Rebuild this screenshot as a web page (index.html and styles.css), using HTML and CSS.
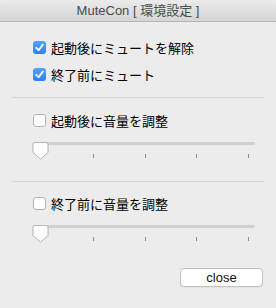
FILE: index.html
```html
<!DOCTYPE html>
<html lang="ja">
<head>
  <meta charset="UTF-8" />
  <title>MuteCon [ 環境設定 ]</title>
  <link rel="stylesheet" href="styles.css">
</head>
<body>
  <div class="window">
    <div class="titlebar">MuteCon [ 環境設定 ]</div>

    <div class="content">
      <!-- ミュート -->
      <div class="section first">
        <label class="row">
          <span class="box checked">
            <svg width="13" height="13" viewBox="0 0 13 13"><path d="M3.2 6.8 L5.6 9.2 L9.9 3.6" fill="none" stroke="#fff" stroke-width="1.8" stroke-linecap="round" stroke-linejoin="round"/></svg>
          </span>
          起動後にミュートを解除
        </label>
        <label class="row">
          <span class="box checked">
            <svg width="13" height="13" viewBox="0 0 13 13"><path d="M3.2 6.8 L5.6 9.2 L9.9 3.6" fill="none" stroke="#fff" stroke-width="1.8" stroke-linecap="round" stroke-linejoin="round"/></svg>
          </span>
          終了前にミュート
        </label>
      </div>

      <div class="separator"></div>

      <!-- 起動後 -->
      <div class="section">
        <label class="row">
          <span class="box"></span>
          起動後に音量を調整
        </label>
        <div class="slider">
          <div class="track"></div>
          <svg class="thumb" width="17" height="18" viewBox="0 0 17 18"><path d="M3 0.5 H14 Q16 0.5 16 2.5 V10.5 L8.5 17 L1 10.5 V2.5 Q1 0.5 3 0.5 Z" fill="#fdfdfd" stroke="#b9b9b9" stroke-width="1"/></svg>
          <div class="ticks"><span></span><span></span><span></span><span></span><span></span></div>
        </div>
      </div>

      <div class="separator second"></div>

      <!-- 終了前 -->
      <div class="section">
        <label class="row">
          <span class="box"></span>
          終了前に音量を調整
        </label>
        <div class="slider">
          <div class="track"></div>
          <svg class="thumb" width="17" height="18" viewBox="0 0 17 18"><path d="M3 0.5 H14 Q16 0.5 16 2.5 V10.5 L8.5 17 L1 10.5 V2.5 Q1 0.5 3 0.5 Z" fill="#fdfdfd" stroke="#b9b9b9" stroke-width="1"/></svg>
          <div class="ticks"><span></span><span></span><span></span><span></span><span></span></div>
        </div>
      </div>

      <div class="buttons">
        <button class="btn">close</button>
      </div>
    </div>
  </div>
</body>
</html>
```

FILE: styles.css
```css
* {
  margin: 0;
  padding: 0;
  box-sizing: border-box;
}

body {
  background-color: #ececec;
  font-family: "Liberation Sans", "Noto Sans CJK JP", sans-serif;
  font-size: 13px;
  color: #000;
}

.window {
  width: 276px;
  height: 308px;
  background: #ececec;
  border-radius: 5px 5px 0 0;
  overflow: hidden;
}

.titlebar {
  height: 22px;
  line-height: 21px;
  text-align: center;
  color: #4a4a4a;
  background: linear-gradient(#ebebeb, #d5d5d5);
  border-bottom: 1px solid #b4b4b4;
}

.content {
  padding: 0 12px;
}

.section.first {
  padding-top: 12px;
}

.row {
  display: flex;
  align-items: center;
  height: 27px;
  padding-left: 21px;
  gap: 5px;
}

.box {
  width: 13px;
  height: 13px;
  border-radius: 3px;
  background: #fff;
  border: 1px solid #b3b3b3;
  flex-shrink: 0;
}

.box.checked {
  border: none;
  background: linear-gradient(#55a3fb, #2e7ff5);
}

.box svg {
  display: block;
}

.separator {
  height: 1px;
  background: #d5d5d5;
  margin: 9px 0 9px;
}

.separator.second {
  margin: 17px 0 8px;
}

.slider {
  position: relative;
  width: 223px;
  height: 22px;
  margin: 8px 0 0 21px;
}

.track {
  height: 3px;
  margin: 5px 1px 0 4px;
  background: #d0d0d0;
  border-radius: 2px;
}

.thumb {
  position: absolute;
  left: -1px;
  top: 0;
  filter: drop-shadow(0 0.5px 0.5px rgba(0,0,0,0.12));
}

.ticks {
  display: flex;
  justify-content: space-between;
  padding: 0 7px 0 8px;
  margin-top: 9px;
}

.ticks span {
  width: 1px;
  height: 4px;
  background: #8c8c8c;
}

.buttons {
  display: flex;
  justify-content: flex-end;
  margin-top: 21px;
  padding-right: 1px;
}

.btn {
  width: 83px;
  height: 19px;
  background: #fff;
  border: 1px solid #c3c3c3;
  border-radius: 4px;
  font-family: "Liberation Sans", sans-serif;
  font-size: 13px;
  color: #111;
  box-shadow: 0 0.5px 0.5px rgba(0,0,0,0.08);
}
```
